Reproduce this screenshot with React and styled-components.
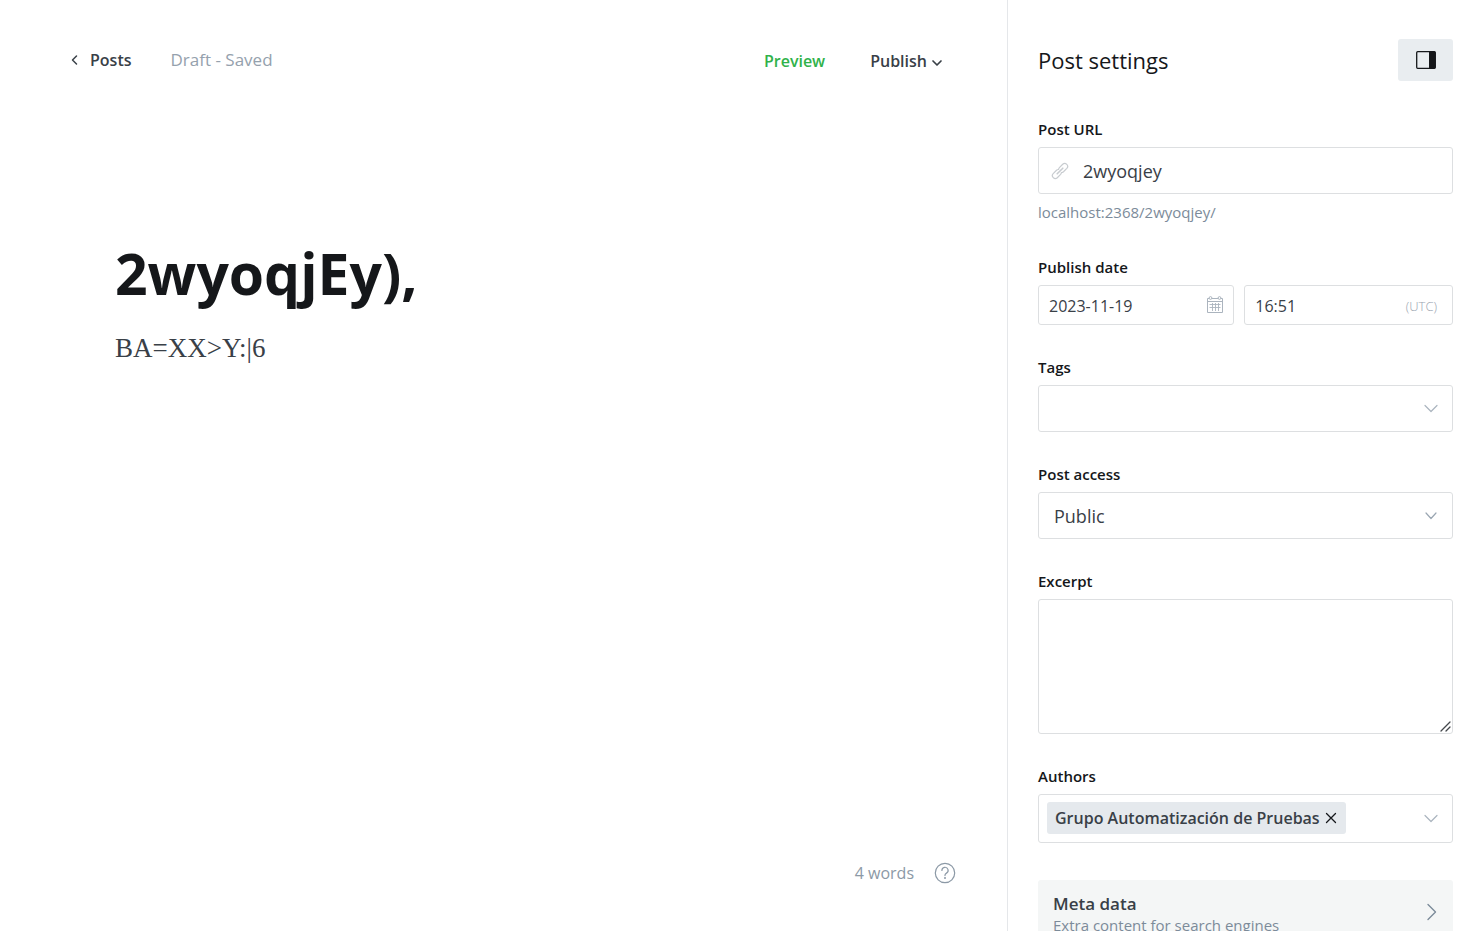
import React, { useState } from "react";
import styled, { createGlobalStyle } from "styled-components";

const sans = `"Open Sans", "Noto Sans", sans-serif`;

const GlobalStyle = createGlobalStyle`
  *, *::before, *::after { box-sizing: border-box; }
  body { margin: 0; background: #fff; color: #15171a; font-family: ${sans}; }
  button, input, select, textarea { font: inherit; color: inherit; }
  button { border: 0; background: none; padding: 0; cursor: pointer; }
  h2, p { margin: 0; }
`;

const Shell = styled.div`
  display: grid;
  grid-template-columns: minmax(0, 1fr) 476px;
  height: 100vh;
  overflow: hidden;
`;

const Editor = styled.main`
  display: flex;
  flex-direction: column;
  min-width: 0;
`;

const TopBar = styled.header`
  display: flex;
  align-items: center;
  padding: 47px 64px 0 70px;
  line-height: 24px;
`;

const BackLink = styled.a`
  display: flex;
  align-items: center;
  gap: 10px;
  color: #394047;
  font-size: 16px;
  font-weight: 600;
  text-decoration: none;
`;

const Status = styled.span`
  margin-left: 39px;
  color: #95a1ad;
  font-size: 17px;
`;

const Actions = styled.div`
  display: flex;
  gap: 45px;
  margin-left: auto;
  padding-top: 2px;
`;

const ActionButton = styled.button`
  display: flex;
  align-items: center;
  gap: 4px;
  color: ${(p) => (p.$accent ? "#30b24a" : "#394047")};
  font-size: 16px;
  font-weight: 600;
  line-height: 24px;

  svg { margin-top: 4px; }
`;

const Canvas = styled.section`
  flex: 1;
  min-height: 0;
  padding: 158px 115px 0;
`;

const TitleInput = styled.input`
  display: block;
  width: 100%;
  height: 84px;
  padding: 0;
  border: 0;
  outline: 0;
  background: none;
  color: #15171a;
  font-size: 57px;
  font-weight: 700;
`;

const Body = styled.div`
  margin-top: 15px;
  outline: 0;
  color: #394047;
  font-family: "Liberation Serif", serif;
  font-size: 27px;
  line-height: 36px;
`;

const StatusBar = styled.footer`
  display: flex;
  justify-content: flex-end;
  align-items: center;
  gap: 20px;
  padding: 0 51px 46px 0;
  color: #8c99a6;
  font-size: 16px;
  line-height: 24px;
`;

const HelpButton = styled.button`
  display: flex;
  color: #8c99a6;
`;

const Settings = styled.aside`
  display: flex;
  flex-direction: column;
  gap: 32px;
  min-height: 0;
  padding: 39px 30px 0;
  border-left: 1px solid #e5e7ea;
  overflow-y: auto;
  scrollbar-width: none;
`;

const SettingsHeader = styled.div`
  display: flex;
  justify-content: space-between;
  align-items: center;
  margin-bottom: 6px;
`;

const Heading = styled.h2`
  font-size: 22px;
  font-weight: 500;
  line-height: 30px;
`;

const ToggleButton = styled.button`
  display: flex;
  justify-content: center;
  align-items: center;
  width: 55px;
  height: 42px;
  border-radius: 3px;
  background: #e9edf0;
  color: #15171a;
`;

const Field = styled.div`
  display: flex;
  flex-direction: column;
`;

const Label = styled.label`
  margin-bottom: 8px;
  font-size: 15px;
  font-weight: 600;
  line-height: 20px;
`;

const Control = styled.div`
  display: flex;
  align-items: center;
  height: ${(p) => p.$height || 47}px;
  padding: 0 ${(p) => (p.$compact ? 10 : 14)}px;
  border: 1px solid #dddfe1;
  border-radius: 3px;
  background: #fff;
`;

const ControlInput = styled.input`
  flex: 1;
  min-width: 0;
  height: 100%;
  padding: ${(p) => (p.$compact ? "2px 0 0" : 0)};
  border: 0;
  outline: 0;
  background: none;
  color: #394047;
  font-size: ${(p) => (p.$compact ? 16 : 18)}px;
`;

const UrlControl = styled(Control)`
  gap: 14px;
  padding-left: 12px;
`;

const Hint = styled.p`
  margin: 6px 0 1px;
  color: #7c8b9a;
  font-size: 15px;
  line-height: 24px;
`;

const DateRow = styled.div`
  display: grid;
  grid-template-columns: minmax(0, 47fr) minmax(0, 50fr);
  gap: 10px;
`;

const DateControl = styled(Control)`
  padding-right: 9px;
`;

const Zone = styled.span`
  padding: 2px 5px 0 0;
  color: #9aa5b0;
  font-size: 13px;
  font-weight: 300;
`;

const Stack = styled.div`
  display: grid;
  align-items: center;

  > * { grid-area: 1 / 1; }
  > svg { justify-self: end; margin-right: 16px; pointer-events: none; }
`;

const Select = styled.select`
  appearance: none;
  width: 100%;
  height: 47px;
  padding: 0 40px 0 15px;
  border: 1px solid #dddfe1;
  border-radius: 3px;
  outline: 0;
  background: #fff;
  color: #394047;
  font-size: 18px;
`;

const ExcerptStack = styled(Stack)`
  > svg { align-self: end; margin: 0 2px 2px 0; }
`;

const Excerpt = styled.textarea`
  display: block;
  width: 100%;
  height: 135px;
  padding: 10px 15px;
  border: 1px solid #dddfe1;
  border-radius: 3px;
  outline: 0;
  resize: vertical;
  font-size: 18px;

  &::-webkit-resizer { background: transparent; }
`;

const TokenControl = styled(Control)`
  padding-bottom: 1px;
  padding-left: 8px;
`;

const Token = styled.span`
  display: flex;
  align-items: center;
  gap: 5px;
  height: 32px;
  padding: 0 9px 0 8px;
  border-radius: 3px;
  background: #e5e9ed;
  color: #394047;
  font-size: 16px;
  font-weight: 600;
  white-space: nowrap;

  button { display: flex; color: #15171a; }
`;

const MetaButton = styled.button`
  display: flex;
  justify-content: space-between;
  flex: none;
  margin-top: 5px;
  padding: 12px 16px 9px 15px;
  border-radius: 3px;
  background: #f4f6f6;
  text-align: left;

  > svg { margin-top: 11px; }
`;

const MetaTitle = styled.span`
  display: block;
  color: #394047;
  font-size: 17px;
  font-weight: 600;
  line-height: 23px;
`;

const MetaText = styled.span`
  display: block;
  color: #7c8b9a;
  font-size: 15px;
  line-height: 20px;
`;

const Line = ({ w, h, d, color = "currentColor", stroke = 1 }) => (
  <svg width={w} height={h} viewBox={`0 0 ${w} ${h}`} fill="none" stroke={color} strokeWidth={stroke} strokeLinecap="round" strokeLinejoin="round" aria-hidden="true">
    <path d={d} />
  </svg>
);

const DropArrow = () => <Line w={14} h={9} d="M1 1.5 7 7.5 13 1.5" color="#aab4be" stroke={1.2} />;

const SelectArrow = () => <Line w={12} h={8} d="M1 1 6 6.5 11 1" color="#9aa6b2" stroke={1.2} />;

const Grip = () => <Line w={12} h={12} d="M2 11 11 2M7 11l4-4" color="#44484c" stroke={1.3} />;

const LinkIcon = () => (
  <svg width="18" height="18" viewBox="0 0 18 18" fill="none" stroke="#c8ccd0" strokeWidth="1.2" strokeLinecap="round" aria-hidden="true">
    <path d="M10.6 10.5a2.9 2.9 0 0 0 1.9-.8l3.3-3.3a2.9 2.9 0 0 0-4.1-4.1L8.4 5.6a2.9 2.9 0 0 0-.8 1.9" />
    <path d="M7.4 7.5a2.9 2.9 0 0 0-1.9.8l-3.3 3.3a2.9 2.9 0 0 0 4.1 4.1l3.3-3.3a2.9 2.9 0 0 0 .8-1.9" />
    <path d="M6.2 11.8l5.6-5.6" strokeWidth="1.6" />
  </svg>
);

const CalendarIcon = () => (
  <svg width="18" height="18" viewBox="0 0 18 18" fill="none" stroke="#abb4be" aria-hidden="true">
    <path d="M3 2.5H1.5v14h15v-14H15M6 2.5h6M1.5 5.5h15" />
    <circle cx="4.5" cy="2" r="1.4" />
    <circle cx="13.5" cy="2" r="1.4" />
    <path d="M3.5 8.5h11M3.5 11.5h11M6.5 7v8M9.5 7v8M12.5 7v8" strokeWidth="0.9" />
  </svg>
);

const SidebarIcon = () => (
  <svg width="20" height="18" viewBox="0 0 20 18" aria-hidden="true">
    <rect x="0.7" y="0.7" width="18.6" height="16.6" rx="1" fill="none" stroke="currentColor" strokeWidth="1.3" />
    <path d="M13 0.5h5.5a1 1 0 0 1 1 1v15a1 1 0 0 1-1 1H13z" fill="currentColor" />
  </svg>
);

const HelpIcon = () => (
  <svg width="22" height="22" viewBox="0 0 22 22" fill="none" stroke="currentColor" strokeWidth="1.2" strokeLinecap="round" aria-hidden="true">
    <circle cx="11" cy="11" r="9.7" />
    <path d="M7.9 8.4a3.1 3.1 0 1 1 4.6 2.7c-.9.5-1.5 1-1.5 2v.5" />
    <circle cx="11" cy="16.1" r="0.4" fill="currentColor" />
  </svg>
);

export default function App() {
  const [title, setTitle] = useState("2wyoqjEy),");
  const [slug, setSlug] = useState("2wyoqjey");
  const [authors, setAuthors] = useState(["Grupo Automatización de Pruebas"]);

  return (
    <>
      <GlobalStyle />
      <Shell>
        <Editor>
          <TopBar>
            <BackLink href="#posts">
              <Line w={10} h={12} d="M6.5 2 2.5 6l4 4" stroke={1.5} />
              Posts
            </BackLink>
            <Status>Draft - Saved</Status>
            <Actions>
              <ActionButton type="button" $accent>Preview</ActionButton>
              <ActionButton type="button">
                Publish
                <Line w={12} h={8} d="M2 2l4 4 4-4" stroke={1.7} />
              </ActionButton>
            </Actions>
          </TopBar>
          <Canvas>
            <TitleInput aria-label="Post title" value={title} onChange={(e) => setTitle(e.target.value)} />
            <Body contentEditable suppressContentEditableWarning role="textbox" aria-label="Post body" spellCheck={false}>
              BA=XX&gt;Y:|6
            </Body>
          </Canvas>
          <StatusBar>
            <span>4 words</span>
            <HelpButton type="button" aria-label="Help"><HelpIcon /></HelpButton>
          </StatusBar>
        </Editor>

        <Settings>
          <SettingsHeader>
            <Heading>Post settings</Heading>
            <ToggleButton type="button" aria-label="Toggle settings"><SidebarIcon /></ToggleButton>
          </SettingsHeader>

          <Field>
            <Label htmlFor="url">Post URL</Label>
            <UrlControl>
              <LinkIcon />
              <ControlInput id="url" value={slug} onChange={(e) => setSlug(e.target.value)} />
            </UrlControl>
            <Hint>localhost:2368/{slug}/</Hint>
          </Field>

          <Field>
            <Label htmlFor="date">Publish date</Label>
            <DateRow>
              <DateControl $height={40} $compact>
                <ControlInput id="date" $compact defaultValue="2023-11-19" />
                <CalendarIcon />
              </DateControl>
              <Control $height={40} $compact>
                <ControlInput aria-label="Publish time" $compact defaultValue="16:51" />
                <Zone>(UTC)</Zone>
              </Control>
            </DateRow>
          </Field>

          <Field>
            <Label htmlFor="tags">Tags</Label>
            <Control>
              <ControlInput id="tags" role="combobox" aria-expanded="false" />
              <DropArrow />
            </Control>
          </Field>

          <Field>
            <Label htmlFor="access">Post access</Label>
            <Stack>
              <Select id="access" defaultValue="Public">
                <option>Public</option>
              </Select>
              <SelectArrow />
            </Stack>
          </Field>

          <Field>
            <Label htmlFor="excerpt">Excerpt</Label>
            <ExcerptStack>
              <Excerpt id="excerpt" />
              <Grip />
            </ExcerptStack>
          </Field>

          <Field>
            <Label htmlFor="authors">Authors</Label>
            <TokenControl $height={49}>
              {authors.map((name) => (
                <Token key={name}>
                  {name}
                  <button type="button" aria-label={`Remove ${name}`} onClick={() => setAuthors(authors.filter((a) => a !== name))}>
                    <Line w={12} h={12} d="M1.5 1.5l9 9M10.5 1.5l-9 9" stroke={1.3} />
                  </button>
                </Token>
              ))}
              <ControlInput id="authors" role="combobox" aria-expanded="false" />
              <DropArrow />
            </TokenControl>
          </Field>

          <MetaButton type="button">
            <span>
              <MetaTitle>Meta data</MetaTitle>
              <MetaText>Extra content for search engines</MetaText>
            </span>
            <Line w={10} h={18} d="M1 1.5 8.5 9 1 16.5" color="#7c8b9a" stroke={1.4} />
          </MetaButton>
        </Settings>
      </Shell>
    </>
  );
}
